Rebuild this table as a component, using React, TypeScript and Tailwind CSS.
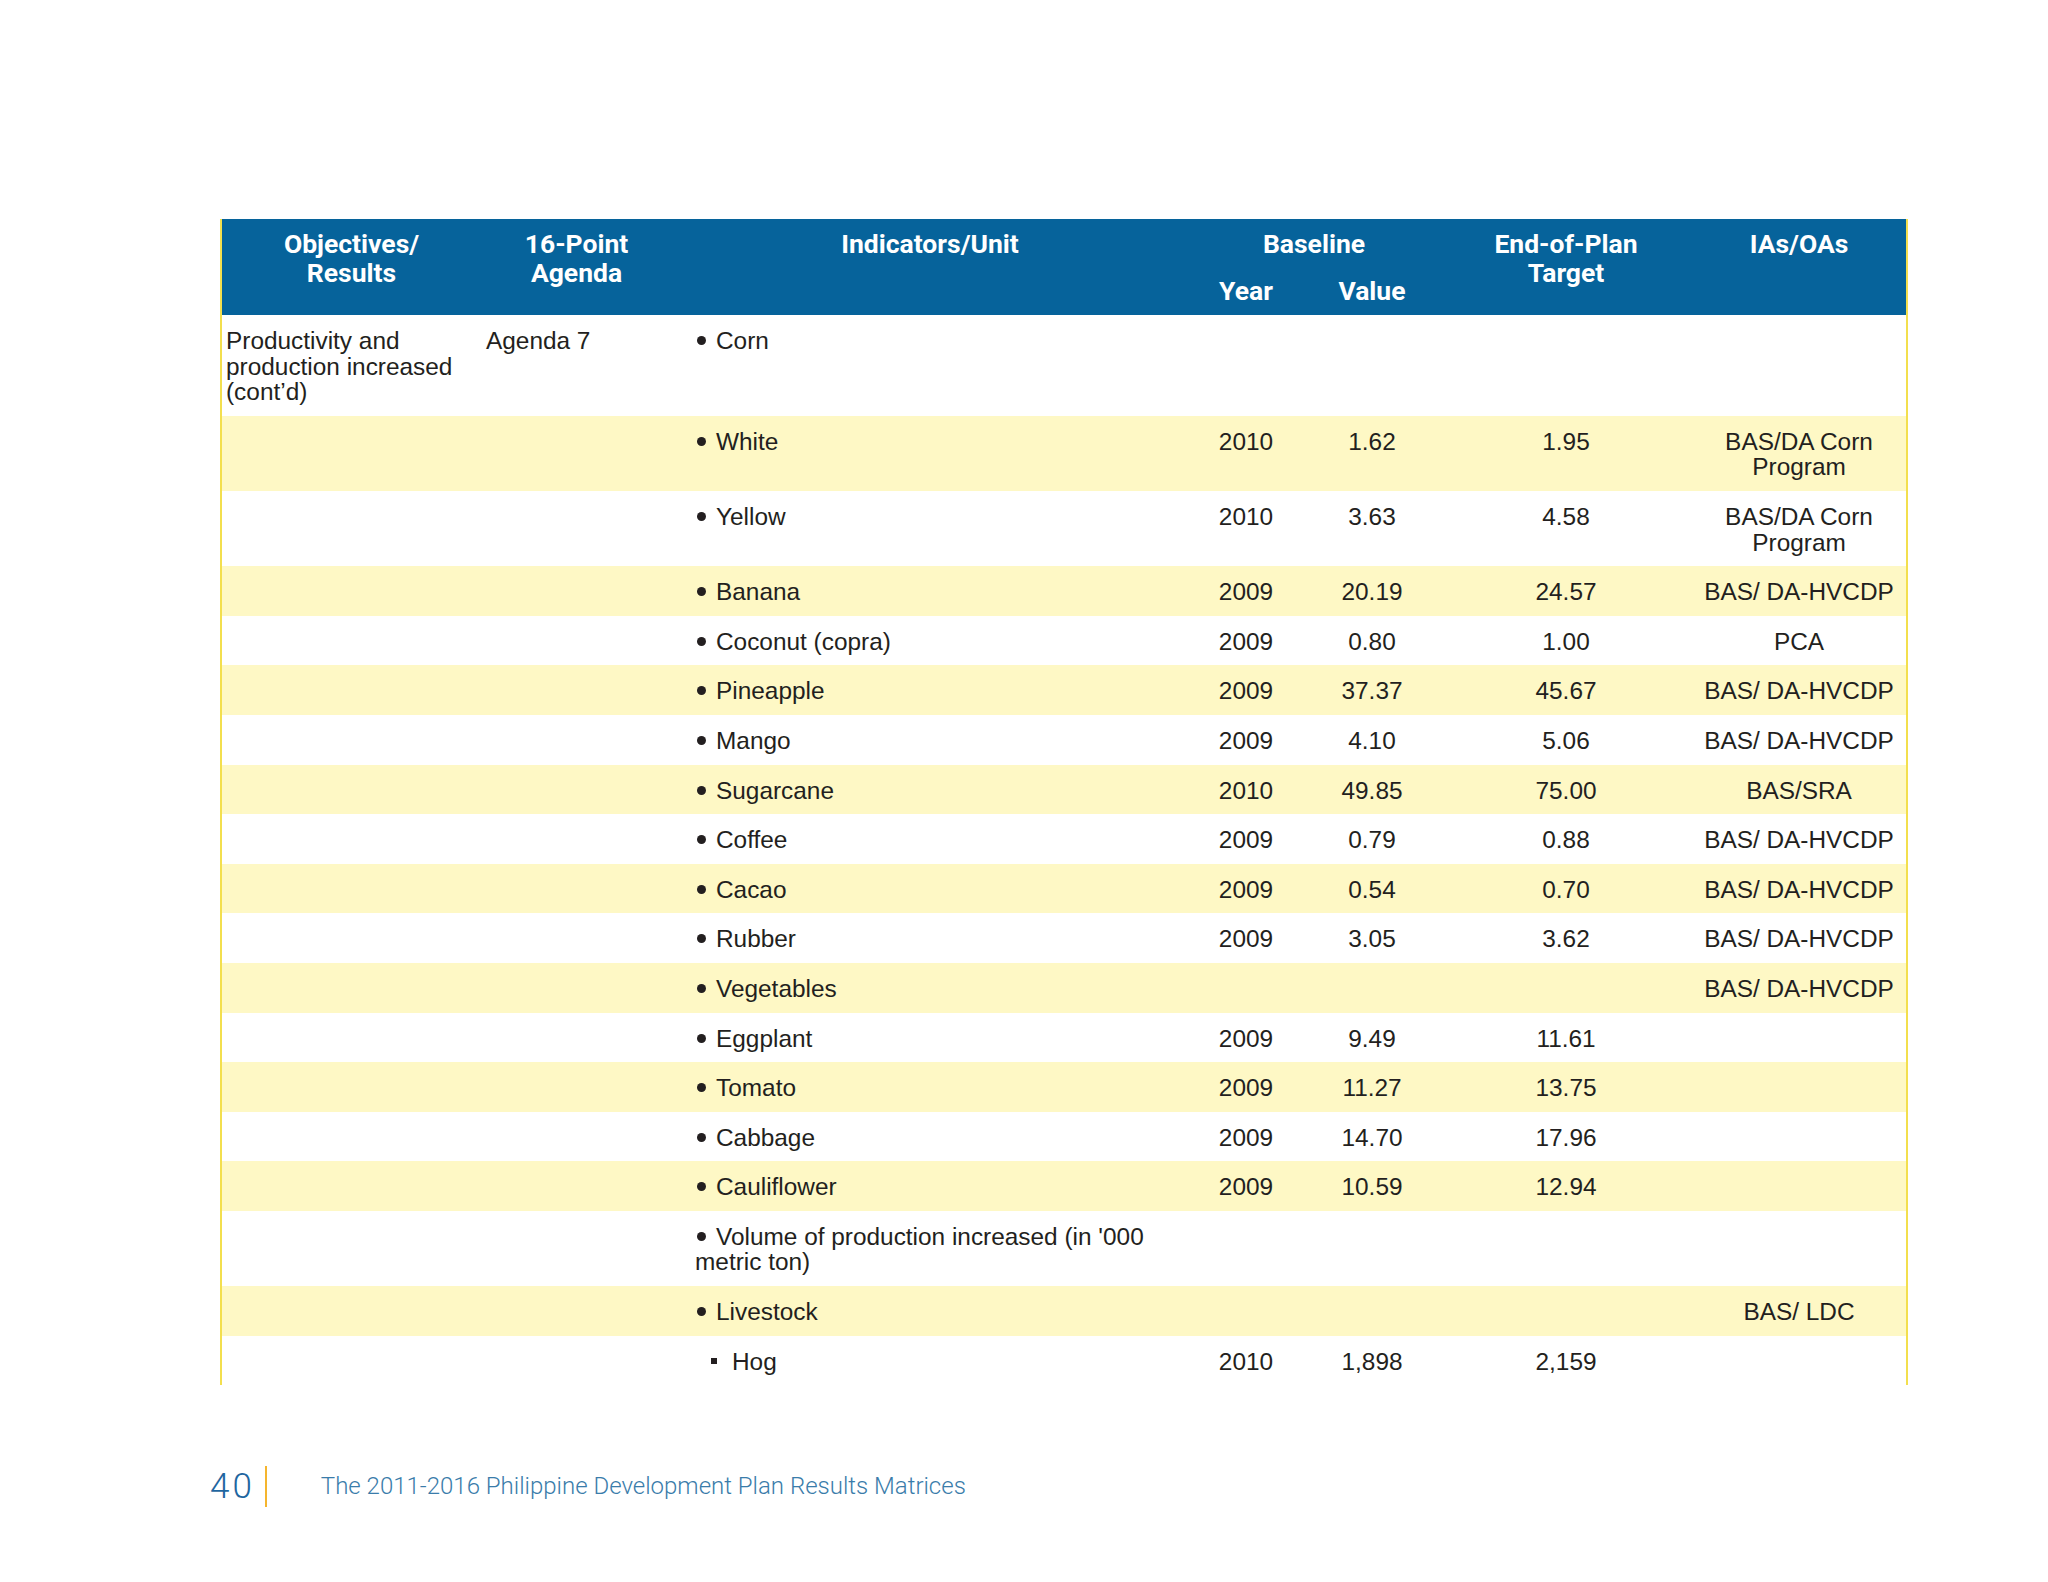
import React from "react";

type Row = {
  c1?: string;
  c2?: string;
  ind: string;
  sq?: boolean;
  year?: string;
  value?: string;
  target?: string;
  ias?: string;
  y: boolean;
};

const rows: Row[] = [
  { c1: "Productivity and production increased (cont\u2019d)", c2: "Agenda 7", ind: "Corn", y: false },
  { ind: "White", year: "2010", value: "1.62", target: "1.95", ias: "BAS/DA Corn Program", y: true },
  { ind: "Yellow", year: "2010", value: "3.63", target: "4.58", ias: "BAS/DA Corn Program", y: false },
  { ind: "Banana", year: "2009", value: "20.19", target: "24.57", ias: "BAS/ DA-HVCDP", y: true },
  { ind: "Coconut (copra)", year: "2009", value: "0.80", target: "1.00", ias: "PCA", y: false },
  { ind: "Pineapple", year: "2009", value: "37.37", target: "45.67", ias: "BAS/ DA-HVCDP", y: true },
  { ind: "Mango", year: "2009", value: "4.10", target: "5.06", ias: "BAS/ DA-HVCDP", y: false },
  { ind: "Sugarcane", year: "2010", value: "49.85", target: "75.00", ias: "BAS/SRA", y: true },
  { ind: "Coffee", year: "2009", value: "0.79", target: "0.88", ias: "BAS/ DA-HVCDP", y: false },
  { ind: "Cacao", year: "2009", value: "0.54", target: "0.70", ias: "BAS/ DA-HVCDP", y: true },
  { ind: "Rubber", year: "2009", value: "3.05", target: "3.62", ias: "BAS/ DA-HVCDP", y: false },
  { ind: "Vegetables", ias: "BAS/ DA-HVCDP", y: true },
  { ind: "Eggplant", year: "2009", value: "9.49", target: "11.61", y: false },
  { ind: "Tomato", year: "2009", value: "11.27", target: "13.75", y: true },
  { ind: "Cabbage", year: "2009", value: "14.70", target: "17.96", y: false },
  { ind: "Cauliflower", year: "2009", value: "10.59", target: "12.94", y: true },
  { ind: "Volume of production increased (in '000 metric ton)", y: false },
  { ind: "Livestock", ias: "BAS/ LDC", y: true },
  { ind: "Hog", sq: true, year: "2010", value: "1,898", target: "2,159", y: false },
];

const cols = "grid grid-cols-[259px_191px_516px_116px_136px_252px_214px]";

export default function App() {
  return (
    <div className="w-[2048px] h-[1582px] bg-white pt-[219px] pl-[220px] font-['Liberation_Sans',Arial,sans-serif] text-[#231f20]">
      <div className="w-[1688px] border-x-[2px] border-[#f3df4e]">
        {/* Header */}
        <div className={`${cols} h-[96px] bg-[#06639b] text-white font-['Roboto',sans-serif] font-bold text-[26.5px] leading-[29px]`}>
          <div className="pt-[10px] text-center">
            Objectives/
            <br />
            Results
          </div>
          <div className="pt-[10px] text-center">
            16-Point
            <br />
            Agenda
          </div>
          <div className="pt-[10px] text-center">Indicators/Unit</div>
          <div className="col-span-2 pt-[10px] flex flex-col">
            <div className="text-center">Baseline</div>
            <div className="mt-[18px] grid grid-cols-[116px_136px]">
              <div className="text-center">Year</div>
              <div className="text-center">Value</div>
            </div>
          </div>
          <div className="pt-[10px] text-center">
            End-of-Plan
            <br />
            Target
          </div>
          <div className="pt-[10px] text-center">IAs/OAs</div>
        </div>
        {/* Body */}
        {rows.map((r, i) => (
          <div
            key={i}
            className={`${cols} text-[24.4px] leading-[25.6px] ${r.y ? "bg-[#fef8c5]" : "bg-white"}`}
          >
            <div className="pt-[13px] pb-[11px] pl-[4px] pr-[2px]">{r.c1 ?? ""}</div>
            <div className="pt-[13px] pb-[11px] pl-[5px]">{r.c2 ?? ""}</div>
            <div className="pt-[13px] pb-[11px] pl-[23px] pr-[2px]">
              {r.sq ? (
                <span className="inline-block w-[6px] h-[6px] bg-[#231f20] ml-[16px] mr-[15px] align-[6px]" />
              ) : (
                <span className="inline-block w-[9px] h-[9px] rounded-full bg-[#231f20] ml-[2px] mr-[10px] align-[4px]" />
              )}
              {r.ind}
            </div>
            <div className="pt-[13px] pb-[11px] text-center">{r.year ?? ""}</div>
            <div className="pt-[13px] pb-[11px] text-center">{r.value ?? ""}</div>
            <div className="pt-[13px] pb-[11px] text-center">{r.target ?? ""}</div>
            <div className="pt-[13px] pb-[11px] text-center">{r.ias ?? ""}</div>
          </div>
        ))}
      </div>
      {/* Footer */}
      <div className="mt-[80px] ml-[-10px] flex items-center h-[42px] font-['Roboto',sans-serif] font-light">
        <span className="text-[35px] leading-none text-[#1f66a0] tracking-[3px]">40</span>
        <span className="ml-[10px] w-[2px] h-[41px] bg-[#f5b52e]" />
        <span className="ml-[54px] text-[24px] text-[#3a7caa] leading-none">
          The 2011-2016 Philippine Development Plan Results Matrices
        </span>
      </div>
    </div>
  );
}
